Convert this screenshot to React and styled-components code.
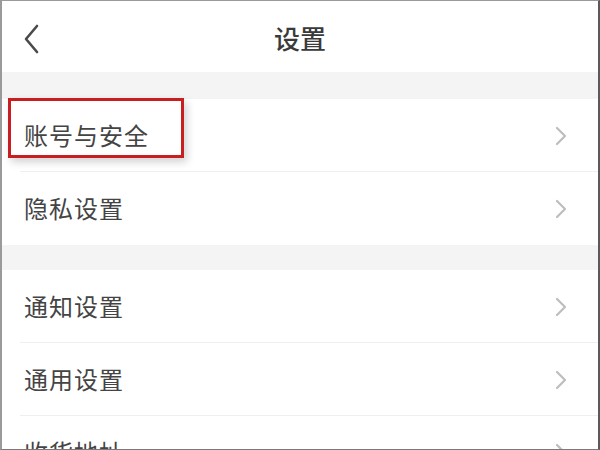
import React from 'react';
import styled, { createGlobalStyle } from 'styled-components';

const Global = createGlobalStyle`
  html, body {
    margin: 0;
    padding: 0;
    background: #fff;
  }
  body {
    font-family: "Noto Sans CJK SC", "Noto Sans", sans-serif;
  }
`;

// outer frame of the screenshot
const Frame = styled.div`
  box-sizing: border-box;
  width: 600px;
  height: 450px;
  overflow: hidden;
  border-top: 1px solid #9a9a9a;
  border-left: 2px solid #9a9a9a;
  border-right: 2px solid #5a5a5a;
  border-bottom: 1px solid #7a7a7a;
  background: #fff;
  display: flex;
  flex-direction: column;
`;

const Header = styled.div`
  flex: 0 0 71px;
  display: grid;
  grid-template-columns: 60px 1fr 60px;
  align-items: center;
`;

const BackButton = styled.div`
  display: flex;
  align-items: center;
  padding-left: 20px;
  padding-top: 4px;
`;

const Title = styled.h1`
  margin: 0;
  text-align: center;
  font-size: 26px;
  font-weight: 500;
  color: #3a3a3a;
  padding-top: 2px;
`;

const Band = styled.div`
  flex: 0 0 ${p => p.h}px;
  background: #f4f4f4;
`;

const Row = styled.div`
  position: relative;
  flex: 0 0 ${p => p.h || 73}px;
  display: flex;
  align-items: center;
  justify-content: space-between;
  padding: 0 30px 0 22px;
  box-sizing: border-box;
  &::after {
    content: '';
    display: ${p => (p.last ? 'none' : 'block')};
    position: absolute;
    left: 18px;
    right: 0;
    bottom: 0;
    height: 1px;
    background: #efefef;
  }
`;

const Label = styled.span`
  font-size: 24px;
  color: #444;
  letter-spacing: 1px;
  padding-bottom: 2px;
`;

const Highlight = styled.div`
  position: absolute;
  left: 6px;
  top: -1px;
  width: 176px;
  height: 60px;
  box-sizing: border-box;
  border: 3px solid #c81e22;
  box-shadow: 3px 4px 8px rgba(0, 0, 0, 0.18);
  pointer-events: none;
`;

const Chevron = () => (
  <svg width="14" height="22" viewBox="0 0 14 22">
    <path d="M3 3 L11 11 L3 19" fill="none" stroke="#bdbdbd" strokeWidth="2.2" strokeLinecap="round" strokeLinejoin="round" />
  </svg>
);

const Back = () => (
  <svg width="20" height="32" viewBox="0 0 20 32">
    <path d="M15 3 L4 16 L15 29" fill="none" stroke="#4a4a4a" strokeWidth="2.6" strokeLinecap="round" strokeLinejoin="round" />
  </svg>
);

const Item = ({ label, h, last, highlighted }) => (
  <Row h={h} last={last}>
    {highlighted && <Highlight />}
    <Label>{label}</Label>
    <Chevron />
  </Row>
);

export default function App() {
  return (
    <>
      <Global />
      <Frame>
        <Header>
          <BackButton><Back /></BackButton>
          <Title>设置</Title>
          <div />
        </Header>
        <Band h={27} />
        <Item label="账号与安全" highlighted />
        <Item label="隐私设置" last />
        <Band h={25} />
        <Item label="通知设置" />
        <Item label="通用设置" />
        <Item label="收货地址" last />
      </Frame>
    </>
  );
}
